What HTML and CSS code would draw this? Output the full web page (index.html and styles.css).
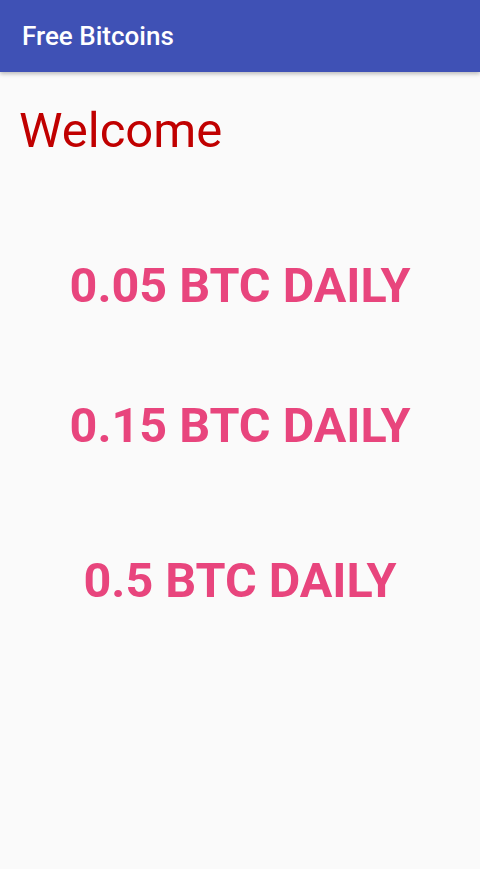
FILE: index.html
```html
<!DOCTYPE html>
<html lang="en">
<head>
    <meta charset="UTF-8">
    <meta name="viewport" content="width=device-width, initial-scale=1.0">
    <title>Free Bitcoins</title>
    <link rel="stylesheet" href="styles.css">
</head>
<body>
    <div class="toolbar">
        <h1>Free Bitcoins</h1>
    </div>
    <div class="content">
        <h2 class="welcome">Welcome</h2>
        <div class="offers">
            <p class="offer first">0.05 BTC DAILY</p>
            <p class="offer second">0.15 BTC DAILY</p>
            <p class="offer third">0.5 BTC DAILY</p>
        </div>
    </div>
</body>
</html>
```

FILE: styles.css
```css
body {
    font-family: Roboto, "Noto Sans", sans-serif;
    background-color: #fafafa;
    margin: 0;
    padding: 0;
}

.toolbar {
    height: 72px;
    background-color: #3f51b5;
    display: flex;
    align-items: center;
    padding: 0 22px;
    box-shadow: 0 2px 4px rgba(0, 0, 0, 0.25);
}

.toolbar h1 {
    margin: 0;
    color: white;
    font-size: 26px;
    font-weight: 500;
}

.content {
    padding: 0 19px;
}

.welcome {
    margin: 30px 0 0;
    color: #c00000;
    font-size: 49px;
    font-weight: 400;
    line-height: 58px;
}

.offers {
    display: flex;
    flex-direction: column;
    align-items: center;
}

.offer {
    margin: 0;
    color: #e8457d;
    font-size: 48.5px;
    font-weight: 700;
    line-height: 56px;
}

.first {
    margin-top: 98px;
}

.second {
    margin-top: 84px;
}

.third {
    margin-top: 99px;
}
```
